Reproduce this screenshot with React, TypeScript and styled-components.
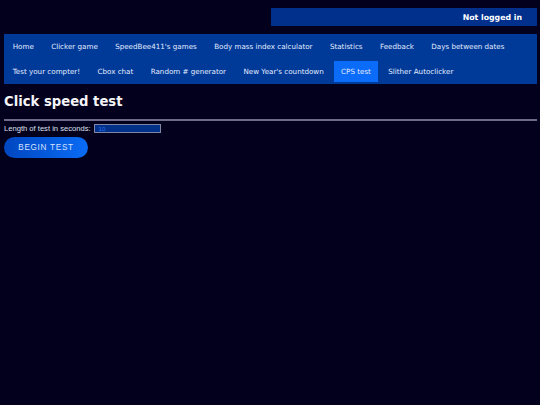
import React from 'react';
import styled, { createGlobalStyle } from 'styled-components';

const GlobalStyle = createGlobalStyle`
  html, body {
    margin: 0;
    padding: 0;
    background: #02001c;
  }
  body {
    font-family: 'DejaVu Sans', Verdana, sans-serif;
    color: #e8ecf8;
  }
`;

const Page = styled.div`
  padding: 8px 3px 0 4px;
`;

const TopBar = styled.div`
  display: flex;
  justify-content: flex-end;
`;

const LoginBox = styled.div`
  width: 50%;
  height: 18px;
  box-sizing: border-box;
  background: #00308c;
  display: flex;
  align-items: center;
  justify-content: flex-end;
  padding-right: 15px;
  font-weight: bold;
  font-size: 7.8px;
  color: #ffffff;
`;

const Nav = styled.nav`
  margin-top: 8px;
  background: #003a98;
  display: flex;
  flex-wrap: wrap;
`;

const NavItem = styled.a<{ $active?: boolean }>`
  display: block;
  margin: 2px 2px;
  padding: 0 6.7px;
  height: 21px;
  line-height: 22px;
  font-size: 7.15px;
  color: #e4eaff;
  text-decoration: none;
  background: ${(p) => (p.$active ? '#0a6cf8' : 'transparent')};
  cursor: pointer;
`;

const Heading = styled.h1`
  margin: 10px 0 0;
  font-size: 13.2px;
  font-weight: bold;
  color: #f4f4f8;
  line-height: 16px;
`;

const Rule = styled.hr`
  margin: 9px 0 0;
  border: none;
  height: 2px;
  background: #6e6a8c;
`;

const Form = styled.div`
  margin-top: 3px;
  display: flex;
  align-items: center;
  gap: 3px;
  font-family: 'Liberation Sans', Arial, sans-serif;
  font-size: 7.6px;
  color: #dfe2ee;
`;

const NumberInput = styled.input`
  width: 67px;
  height: 9px;
  box-sizing: border-box;
  padding: 0 4px;
  background: #003088;
  border: 1px solid #7f86a8;
  color: #2f74ff;
  font-family: 'Liberation Sans', Arial, sans-serif;
  font-size: 6px;
  outline: none;
`;

const BeginButton = styled.button`
  margin-top: 4px;
  width: 84px;
  height: 21px;
  border: none;
  border-radius: 11px;
  background: linear-gradient(90deg, #0046c0 0%, #0a6cf5 100%);
  color: #d6e4ff;
  font-family: 'Liberation Sans', Arial, sans-serif;
  font-size: 8.2px;
  letter-spacing: 0.7px;
  cursor: pointer;
`;

const links = [
  'Home',
  'Clicker game',
  "SpeedBee411's games",
  'Body mass index calculator',
  'Statistics',
  'Feedback',
  'Days between dates',
  'Test your compter!',
  'Cbox chat',
  'Random # generator',
  "New Year's countdown",
  'CPS test',
  'Slither Autoclicker',
];

export default function App() {
  return (
    <Page>
      <GlobalStyle />
      <TopBar>
        <LoginBox>Not logged in</LoginBox>
      </TopBar>
      <Nav>
        {links.map((l) => (
          <NavItem key={l} $active={l === 'CPS test'}>
            {l}
          </NavItem>
        ))}
      </Nav>
      <Heading>Click speed test</Heading>
      <Rule />
      <Form>
        <label>Length of test in seconds:</label>
        <NumberInput type="text" defaultValue="10" />
      </Form>
      <BeginButton>BEGIN TEST</BeginButton>
    </Page>
  );
}
